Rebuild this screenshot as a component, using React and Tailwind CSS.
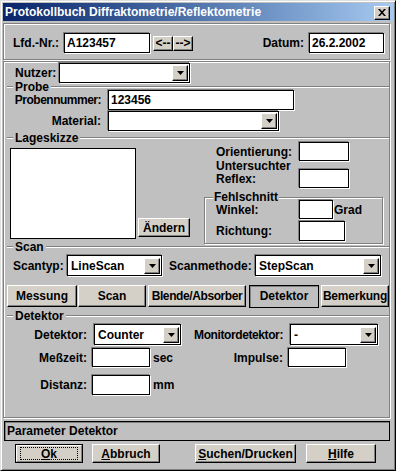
import React from "react";

const raised =
  "bg-[#d4d0c8] border border-t-white border-l-white border-b-black border-r-black shadow-[inset_-1px_-1px_0_#808080]";
const field =
  "bg-white border border-black shadow-[-1px_-1px_0_#808080,1px_1px_0_#ffffff]";
const etched =
  "border border-[#808080] shadow-[inset_1px_1px_0_#ffffff,1px_1px_0_#ffffff]";

function Field({ cls, children }) {
  return (
    <div className={`${field} ${cls} flex items-center pl-[2px] overflow-hidden whitespace-nowrap`}>
      {children}
    </div>
  );
}

function Combo({ cls, value }) {
  return (
    <div className={`${field} ${cls} flex items-center`}>
      <span className="flex-1 pl-[3px] whitespace-nowrap overflow-hidden">{value}</span>
      <div className={`w-[16px] h-[16px] mr-[1px] ${raised} flex items-center justify-center`}>
        <svg width="7" height="4" viewBox="0 0 7 4">
          <path d="M0 0h7L3.5 4z" fill="black" />
        </svg>
      </div>
    </div>
  );
}

function Btn({ cls, children }) {
  return (
    <div className={`${raised} ${cls} flex items-center justify-center whitespace-nowrap`}>
      {children}
    </div>
  );
}

function GroupHeader({ label, cls }) {
  return (
    <div className={`flex items-center h-[8px] ${cls}`}>
      <div className="ml-[3px] w-[6px] h-[2px] border-t border-t-[#808080] border-b border-b-white" />
      <span className="px-[2px] leading-none whitespace-nowrap">{label}</span>
      <div className="flex-1 h-[2px] border-t border-t-[#808080] border-b border-b-white" />
    </div>
  );
}

export default function App() {
  return (
    <div className="w-[396px] h-[471px] bg-[#c0c0c0] font-['Liberation_Sans',Arial,sans-serif] font-bold text-[12px] text-black leading-none border border-t-[#dfdfdf] border-l-[#dfdfdf] border-b-black border-r-black shadow-[inset_1px_1px_0_#ffffff,inset_-1px_-1px_0_#808080] pt-[2px] px-[2px] overflow-hidden">
      {/* Title bar */}
      <div className="h-[18px] bg-linear-to-r from-[#0a246a] to-[#a6caf0] flex items-center pl-[2px] pr-[3px]">
        <span className="text-white flex-1 whitespace-nowrap">
          Protokollbuch Diffraktometrie/Reflektometrie
        </span>
        <div className={`w-[16px] h-[14px] mt-[1px] ${raised} flex items-center justify-center`}>
          <svg width="8" height="7" viewBox="0 0 8 7">
            <path d="M0 0h2l2 2.2L6 0h2L5 3.5 8 7H6L4 4.8 2 7H0l3-3.5z" fill="black" />
          </svg>
        </div>
      </div>

      {/* Top panel */}
      <div className={`mt-[2px] w-[387px] h-[37px] ${etched}`}>
        <div className="mt-[9px] h-[20px] flex items-center">
          <span className="ml-[9px] w-[51px]">Lfd.-Nr.:</span>
          <Field cls="w-[86px] h-[20px]">A123457</Field>
          <Btn cls="ml-[3px] w-[20px] h-[15px]">&lt;--</Btn>
          <Btn cls="w-[20px] h-[15px]">--&gt;</Btn>
          <span className="ml-auto mr-[5px]">Datum:</span>
          <Field cls="w-[75px] h-[20px] mr-[5px]">26.2.2002</Field>
        </div>
      </div>

      {/* Main panel */}
      <div className={`mt-[1px] w-[387px] h-[357px] ${etched}`}>
        {/* Nutzer */}
        <div className="mt-[1px] h-[20px] flex items-center">
          <span className="ml-[11px] w-[44px]">Nutzer:</span>
          <Combo cls="w-[131px] h-[20px]" value="" />
        </div>

        {/* Probe */}
        <GroupHeader label="Probe" />
        <div className="-mt-[1px] h-[20px] flex items-center">
          <span className="w-[97px] text-right tracking-[-0.5px]">Probennummer:</span>
          <Field cls="ml-[7px] w-[186px] h-[20px]">123456</Field>
        </div>
        <div className="mt-[1px] h-[20px] flex items-center">
          <span className="w-[97px] text-right">Material:</span>
          <Combo cls="ml-[7px] w-[171px] h-[20px]" value="" />
        </div>

        {/* Lageskizze */}
        <GroupHeader label="Lageskizze" cls="mt-[3px]" />
        <div className="h-[102px] flex items-start">
          <div className="ml-[6px] mt-[6px] w-[126px] h-[91px] bg-white border border-black" />
          <Btn cls="ml-[2px] mt-[76px] w-[52px] h-[19px]">Ändern</Btn>
          <div className="ml-[14px] w-[179px] flex flex-col">
            <div className="h-[19px] flex items-center">
              <span className="pl-[12px] w-[95px]">Orientierung:</span>
              <Field cls="w-[50px] h-[19px]" />
            </div>
            <div className="h-[27px] flex items-start">
              <div className="pl-[12px] w-[95px] flex flex-col -mt-[1px]">
                <span className="h-[13px] leading-[13px]">Untersuchter</span>
                <span className="h-[13px] leading-[13px]">Reflex:</span>
              </div>
              <Field cls="mt-[8px] w-[50px] h-[19px]" />
            </div>
            <div className={`relative mt-[9px] w-[179px] h-[47px] ${etched}`}>
              <span className="absolute left-[8px] -top-[7px] bg-[#c0c0c0] px-[1px] leading-[12px]">
                Fehlschnitt
              </span>
              <div className="mt-[2px] h-[19px] flex items-center">
                <span className="pl-[11px] w-[94px]">Winkel:</span>
                <Field cls="w-[34px] h-[19px]" />
                <span className="ml-[1px]">Grad</span>
              </div>
              <div className="mt-[2px] h-[20px] flex items-center">
                <span className="pl-[11px] w-[94px]">Richtung:</span>
                <Field cls="w-[46px] h-[20px]" />
              </div>
            </div>
          </div>
        </div>

        {/* Scan */}
        <GroupHeader label="Scan" cls="-mt-[1px]" />
        <div className="mt-[4px] h-[21px] flex items-center">
          <span className="ml-[9px] w-[54px]">Scantyp:</span>
          <Combo cls="w-[95px] h-[21px]" value="LineScan" />
          <span className="ml-[7px] w-[86px]">Scanmethode:</span>
          <Combo cls="w-[126px] h-[21px]" value="StepScan" />
        </div>

        {/* Tabs */}
        <div className="mt-[9px] h-[22px] flex">
          <Btn cls="ml-[3px] w-[70px] h-[22px]">Messung</Btn>
          <Btn cls="ml-[1px] w-[68px] h-[22px]">Scan</Btn>
          <Btn cls="ml-[2px] w-[98px] h-[22px] tracking-[-0.4px]">Blende/Absorber</Btn>
          <div className="ml-[3px] w-[70px] h-[23px] bg-[#c0c0c0] border border-black shadow-[inset_1px_1px_0_#808080] flex justify-center pt-[4px]">
            Detektor
          </div>
          <Btn cls="ml-[2px] w-[68px] h-[22px] tracking-[-0.2px]">Bemerkung</Btn>
        </div>

        {/* Detektor */}
        <GroupHeader label="Detektor" cls="mt-[5px]" />
        <div className="mt-[4px] h-[21px] flex items-center">
          <div className="w-[177px] flex items-center">
            <span className="w-[83px] text-right">Detektor:</span>
            <Combo cls="ml-[7px] w-[87px] h-[21px]" value="Counter" />
          </div>
          <span className="w-[102px] text-right tracking-[-0.4px]">Monitordetektor:</span>
          <Combo cls="ml-[7px] w-[88px] h-[21px]" value="-" />
        </div>
        <div className="mt-[3px] h-[19px] flex items-center">
          <div className="w-[177px] flex items-center">
            <span className="w-[83px] text-right">Meßzeit:</span>
            <Field cls="ml-[5px] w-[58px] h-[19px]" />
            <span className="ml-[3px]">sec</span>
          </div>
          <span className="w-[102px] text-right">Impulse:</span>
          <Field cls="ml-[5px] w-[58px] h-[19px]" />
        </div>
        <div className="mt-[8px] h-[20px] flex items-center">
          <div className="w-[177px] flex items-center">
            <span className="w-[83px] text-right">Distanz:</span>
            <Field cls="ml-[5px] w-[58px] h-[20px]" />
            <span className="ml-[3px]">mm</span>
          </div>
        </div>
      </div>

      {/* Status bar */}
      <div className="mt-[3px] ml-[1px] w-[386px] h-[20px] border border-black shadow-[inset_1px_1px_0_#808080] flex items-center pl-[2px]">
        Parameter Detektor
      </div>

      {/* Buttons */}
      <div className="mt-[3px] h-[19px] flex">
        <div className="ml-[12px] w-[68px] h-[19px] border border-black">
          <div className="w-full h-full bg-[#d4d0c8] border border-t-white border-l-white border-b-[#808080] border-r-[#808080] flex items-center justify-center">
            <div className="outline outline-1 outline-dotted outline-black -outline-offset-1 w-[58px] h-[13px] flex items-center justify-center">
              <span>
                <u>O</u>k
              </span>
            </div>
          </div>
        </div>
        <Btn cls="ml-[9px] w-[68px] h-[19px]">
          <span>
            <u>A</u>bbruch
          </span>
        </Btn>
        <Btn cls="ml-[35px] w-[101px] h-[19px]">
          <span>
            <u>S</u>uchen/Drucken
          </span>
        </Btn>
        <Btn cls="ml-[10px] w-[70px] h-[19px]">
          <span>
            <u>H</u>ilfe
          </span>
        </Btn>
      </div>
    </div>
  );
}
